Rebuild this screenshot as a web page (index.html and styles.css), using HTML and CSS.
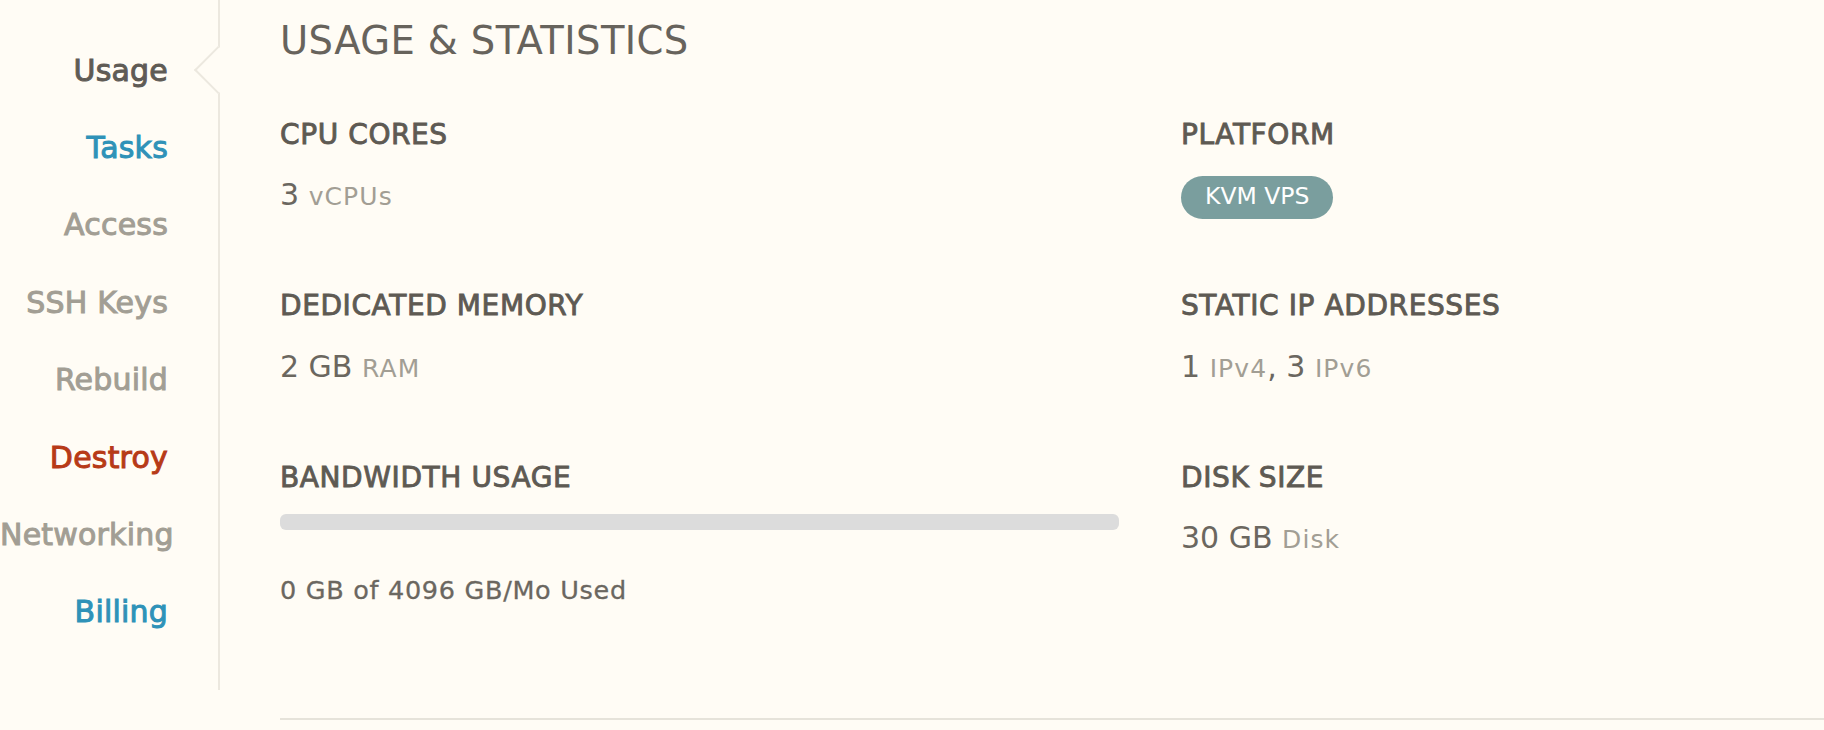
FILE: index.html
```html
<!DOCTYPE html>
<html lang="en">
<head>
<meta charset="utf-8">
<title>Usage &amp; Statistics</title>
<link rel="stylesheet" href="styles.css">
</head>
<body>
<div class="layout">
  <nav class="sidebar">
    <a class="nav-item active" href="#">Usage</a>
    <a class="nav-item link" href="#">Tasks</a>
    <a class="nav-item muted" href="#">Access</a>
    <a class="nav-item muted" href="#">SSH Keys</a>
    <a class="nav-item muted" href="#">Rebuild</a>
    <a class="nav-item danger" href="#">Destroy</a>
    <a class="nav-item muted" href="#">Networking</a>
    <a class="nav-item link" href="#">Billing</a>
  </nav>
  <main class="main">
    <h1 class="title">USAGE &amp; STATISTICS</h1>
    <div class="stats">
      <div class="stat">
        <h3 class="label">CPU CORES</h3>
        <div class="value">3 <span class="unit">vCPUs</span></div>
      </div>
      <div class="stat">
        <h3 class="label">PLATFORM</h3>
        <div class="badge-wrap"><span class="badge">KVM VPS</span></div>
      </div>
      <div class="stat">
        <h3 class="label">DEDICATED MEMORY</h3>
        <div class="value">2 GB <span class="unit">RAM</span></div>
      </div>
      <div class="stat">
        <h3 class="label">STATIC IP ADDRESSES</h3>
        <div class="value">1 <span class="unit">IPv4</span>, 3 <span class="unit">IPv6</span></div>
      </div>
      <div class="stat">
        <h3 class="label">BANDWIDTH USAGE</h3>
        <div class="bar"><div class="bar-fill" style="width:0%"></div></div>
        <div class="bar-text">0 GB of 4096 GB/Mo Used</div>
      </div>
      <div class="stat">
        <h3 class="label">DISK SIZE</h3>
        <div class="value">30 GB <span class="unit">Disk</span></div>
      </div>
    </div>
    <div class="divider"></div>
  </main>
</div>
</body>
</html>
```
FILE: styles.css
```css
* { box-sizing: border-box; }

html, body {
  margin: 0;
  padding: 0;
  background: #fffcf5;
  font-family: "DejaVu Sans", "Noto Sans", sans-serif;
  overflow: hidden;
}

.layout {
  display: flex;
  align-items: flex-start;
}

/* Sidebar */
.sidebar {
  flex: 0 0 220px;
  width: 220px;
  height: 690px;
  border-right: 2px solid #ece8df;
  padding: 31.5px 50px 0 0;
  display: flex;
  flex-direction: column;
  align-items: stretch;
}

.nav-item {
  position: relative;
  display: block;
  text-align: right;
  white-space: nowrap;
  font-size: 30px;
  line-height: 77.4px;
  letter-spacing: 0.2px;
  text-decoration: none;
  -webkit-text-stroke: 1px currentColor;
  margin-right: -50px;
  padding-right: 50px;
}

.nav-item.active { color: #5f5b55; }
.nav-item.link { color: #2f92b8; }
.nav-item.muted { color: #a29e94; }
.nav-item.danger { color: #b73a17; }

.nav-item.active::after {
  content: "";
  position: absolute;
  right: -17px;
  top: 50%;
  width: 32px;
  height: 32px;
  background: #fffcf5;
  border-left: 2px solid #ece8df;
  border-bottom: 2px solid #ece8df;
  transform: translateY(-50%) rotate(45deg);
}

/* Main */
.main {
  flex: 1;
  min-width: 0;
  padding: 18.4px 0 0 60px;
}

.title {
  margin: 0;
  font-size: 38.5px;
  line-height: 46px;
  font-weight: normal;
  color: #67635c;
  letter-spacing: 0.4px;
}

.stats {
  display: grid;
  grid-template-columns: 839px 1fr;
  grid-template-rows: 171.5px 171.5px auto;
  column-gap: 62px;
  margin-top: 53.6px;
}

.label {
  margin: 0;
  font-size: 28px;
  line-height: 34px;
  font-weight: normal;
  letter-spacing: 0.6px;
  color: #5e5a53;
  -webkit-text-stroke: 0.9px currentColor;
}

.value {
  margin-top: 25.15px;
  font-size: 30px;
  line-height: 36px;
  color: #6b675f;
}

.unit {
  font-size: 25px;
  line-height: 1;
  letter-spacing: 1.1px;
  color: #a29e94;
}

.badge-wrap {
  margin-top: 24px;
}

.badge {
  display: inline-block;
  padding: 0 24px 3px;
  line-height: 40px;
  font-size: 23.5px;
  color: #ffffff;
  background: #7a9e9e;
  border-radius: 22px;
}

.bar {
  margin-top: 19.2px;
  height: 16px;
  border-radius: 6px;
  background: #dcdcdc;
  overflow: hidden;
}

.bar-fill {
  height: 100%;
  background: #7a9e9e;
}

.bar-text {
  margin-top: 44.4px;
  font-size: 25.5px;
  line-height: 30px;
  letter-spacing: 0.7px;
  color: #6b6760;
  -webkit-text-stroke: 0.3px currentColor;
}

.divider {
  margin-top: 113.3px;
  height: 2px;
  background: #e6e3da;
}
```
